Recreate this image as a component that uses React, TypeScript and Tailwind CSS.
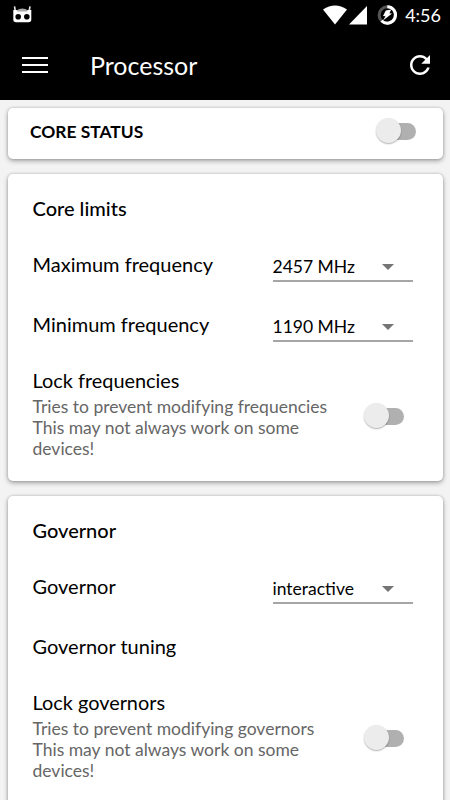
import { useState } from 'react'

function RobotIcon() {
  return (
    <svg className="h-[18px] w-5" viewBox="0 0 20 18">
      <path d="M2.500 .3L3.300 5M18 .3L17.200 5" stroke="#e4e4e4" strokeWidth="1.6" />
      <path d="M4.500 4.500Q10.200 .6 16 4.500V6H4.500z" fill="#aaa" />
      <path d="M1.300 4H19.300V13.500Q19.300 16.200 16.600 16.200H4Q1.300 16.200 1.300 13.500z" fill="#fff" />
      <path d="M4.500 4.500Q10.200 1.500 16 4.500L15 5.500H5.500z" fill="#aaa" />
      <circle cx="6.200" cy="10.700" r="2.800" fill="#000" />
      <circle cx="14.800" cy="10.700" r="2.800" fill="#000" />
    </svg>
  )
}

function StatusBar() {
  return (
    <div className="flex h-[30px] items-center justify-between pl-3 pr-[9px]">
      <RobotIcon />
      <div className="flex items-center">
        <svg className="h-[30px] w-[84px]" viewBox="316 0 84 30">
          <path d="M323 9.500Q335 1.500 347 9.500L335 24.500z" fill="#fff" />
          <path d="M367 6V24.500H349z" fill="#fff" />
          <circle cx="387.300" cy="15" r="8.200" fill="none" stroke="#555" strokeWidth="3" />
          <path d="M387.300 6.800A8.200 8.200 0 1 1 381.500 20.800" fill="none" stroke="#fff" strokeWidth="3" />
          <path d="M385.800 10.500L391.300 9.500L389.400 13.300L392 13.500L383 20.500L385.500 16.300L383 16z" fill="#fff" />
        </svg>
        <span className="ml-[5px] text-[18px] leading-[30px]">4:56</span>
      </div>
    </div>
  )
}

function Toolbar() {
  return (
    <div className="flex h-[70px] items-center pl-[22px] pr-[15px]">
      <button type="button" aria-label="Open menu" className="flex w-[26px] flex-col gap-[5px]">
        <span className="h-0.5 bg-white" />
        <span className="h-0.5 bg-white" />
        <span className="h-0.5 bg-white" />
      </button>
      <h1 className="ml-[42px] flex-1 text-[25px] leading-[30px]">Processor</h1>
      <button type="button" aria-label="Refresh">
        <svg className="h-[30px] w-[30px]" viewBox="0 0 24 24" fill="#fff">
          <path d="M17.650 6.350C16.200 4.900 14.210 4 12 4c-4.420 0-7.990 3.580-7.990 8s3.570 8 7.990 8c3.730 0 6.840-2.550 7.730-6h-2.080c-.820 2.330-3.040 4-5.650 4-3.310 0-6-2.690-6-6s2.690-6 6-6c1.660 0 3.140.690 4.220 1.780L13 11h7V4l-2.350 2.350z" />
        </svg>
      </button>
    </div>
  )
}

function Card({ className, children }: { className: string; children: React.ReactNode }) {
  return (
    <section className={`rounded-[5px] bg-white shadow-[0_2px_5px_rgba(0,0,0,0.32),0_0_3px_rgba(0,0,0,0.18)] ${className}`}>
      {children}
    </section>
  )
}

function Switch({ label, className }: { label: string; className: string }) {
  const [on, setOn] = useState(false)

  return (
    <button
      type="button"
      role="switch"
      aria-checked={on}
      aria-label={label}
      onClick={() => setOn(!on)}
      className={`relative flex h-[26px] w-10 shrink-0 items-center ${className}`}
    >
      <span className="ml-1 h-[17px] w-9 rounded-full bg-[#b0b0b0]" />
      <span
        className={`absolute top-0 h-[25px] w-[25px] rounded-full bg-[#ececec] shadow-[0_1px_1.500px_rgba(0,0,0,0.3)] ${on ? 'right-0' : 'left-0'}`}
      />
    </button>
  )
}

function SpinnerRow({ label, value }: { label: string; value: string }) {
  return (
    <div className="flex h-[60px] items-center justify-between">
      <span className="mb-[2px] text-[20px] leading-6">{label}</span>
      <div className="mt-[3px] flex h-[32px] w-[140px] items-center border-b-2 border-[#a6a6a6]">
        <span className="flex-1 pt-[3px] text-[17.500px] leading-6">{value}</span>
        <svg className="mr-[19px] mt-[3px] h-[6px] w-3" viewBox="0 0 12 6">
          <path d="M0 0h12L6 6z" fill="#757575" />
        </svg>
      </div>
    </div>
  )
}

function LockRow({ title, subject }: { title: string; subject: string }) {
  return (
    <div className="flex items-center justify-between pr-[9px] pt-[12px]">
      <div>
        <h3 className="mb-[3px] text-[19.900px] leading-[26px]">{title}</h3>
        <p className="w-[310px] text-[17.500px] leading-[21px] text-[#666]">
          Tries to prevent modifying {subject}
          <br />
          This may not always work on some
          <br />
          devices!
        </p>
      </div>
      <Switch label={title} className="mt-[7px]" />
    </div>
  )
}

export default function App() {
  return (
    <div className="h-[800px] w-[450px] overflow-hidden bg-[#f3f3f3] font-['Lato',sans-serif] text-black">
      <header className="bg-black text-white">
        <StatusBar />
        <Toolbar />
      </header>

      <main className="flex flex-col gap-[15px] px-[7.500px] pt-[7.500px]">
        <Card className="flex h-[51px] items-center justify-between pl-[22.500px] pr-[26.500px]">
          <h2 className="mb-[3px] text-[17.400px] font-bold leading-6">CORE STATUS</h2>
          <Switch label="Core status" className="mb-[4px]" />
        </Card>

        <Card className="h-[307px] pl-[25px] pr-[30px] pt-[21px]">
          <h2 className="mb-[14px] text-[20px] font-medium leading-[26px]">Core limits</h2>
          <SpinnerRow label="Maximum frequency" value="2457 MHz" />
          <SpinnerRow label="Minimum frequency" value="1190 MHz" />
          <LockRow title="Lock frequencies" subject="frequencies" />
        </Card>

        <Card className="h-[367px] pl-[25px] pr-[30px] pt-[21px]">
          <h2 className="mb-[14px] text-[20px] font-medium leading-[26px]">Governor</h2>
          <SpinnerRow label="Governor" value="interactive" />
          <div className="flex h-[60px] items-center pb-[2px] text-[20px]">Governor tuning</div>
          <LockRow title="Lock governors" subject="governors" />
        </Card>
      </main>
    </div>
  )
}
